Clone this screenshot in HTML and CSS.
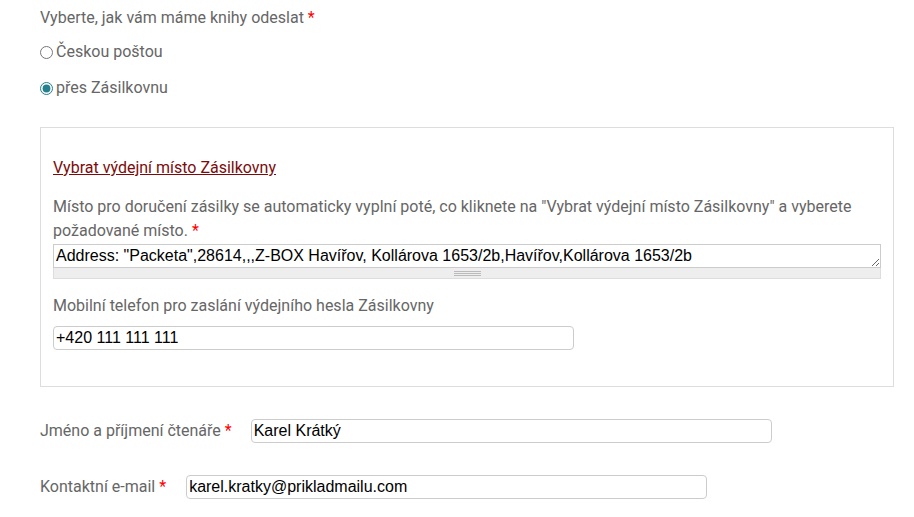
FILE: index.html
```html
<!DOCTYPE html>
<html lang="cs">
<head>
<meta charset="utf-8">
<link rel="stylesheet" href="styles.css">
</head>
<body>
<form class="form">
  <div class="question">Vyberte, jak vám máme knihy odeslat <span class="req">*</span></div>
  <label class="option option-first"><input type="radio" name="ship" class="radio"> Českou poštou</label>
  <label class="option option-second"><input type="radio" name="ship" class="radio" checked> přes Zásilkovnu</label>

  <div class="box">
    <a class="pick-link" href="#">Vybrat výdejní místo Zásilkovny</a>
    <p class="desc">Místo pro doručení zásilky se automaticky vyplní poté, co kliknete na "Vybrat výdejní místo Zásilkovny" a vyberete požadované místo. <span class="req">*</span></p>
    <div class="ta-wrap">
      <textarea class="address" rows="1">Address: "Packeta",28614,,,Z-BOX Havířov, Kollárova 1653/2b,Havířov,Kollárova 1653/2b</textarea>
      <div class="grippie"><span class="grip-lines"></span></div>
    </div>
    <div class="field-label">Mobilní telefon pro zaslání výdejního hesla Zásilkovny</div>
    <input class="text-input phone" type="text" value="+420 111 111 111">
  </div>

  <div class="row row-name">
    <span class="row-label">Jméno a příjmení čtenáře <span class="req">*</span></span>
    <input class="text-input" type="text" value="Karel Krátký">
  </div>
  <div class="row row-mail">
    <span class="row-label">Kontaktní e-mail <span class="req">*</span></span>
    <input class="text-input" type="text" value="karel.kratky@prikladmailu.com">
  </div>
</form>
</body>
</html>
```

FILE: styles.css
```css
html, body {
  margin: 0;
  padding: 0;
  background: #fff;
}
body {
  font-family: Roboto, "Noto Sans", sans-serif;
  font-size: 16px;
  line-height: 24px;
  color: #666;
}
.form {
  padding: 6px 0 0 40px;
  width: 854px;
}
.req {
  color: #f00;
}
.question {
  height: 24px;
}
.option {
  display: flex;
  align-items: center;
  height: 24px;
  gap: 3px;
}
.option-first {
  margin-top: 10px;
}
.option-second {
  margin-top: 12px;
}
.radio {
  margin: 0;
  width: 13px;
  height: 13px;
  accent-color: #24808f;
}
.box {
  margin-top: 27px;
  border: 1px solid #ddd;
  padding: 28px 12px 36px 12px;
}
.pick-link {
  display: block;
  width: max-content;
  color: #7d0a0a;
  text-decoration: underline;
}
.desc {
  margin: 15px 0 0 0;
}
.ta-wrap {
  margin-top: 1px;
  width: 828px;
}
.address {
  display: block;
  box-sizing: border-box;
  width: 828px;
  height: 24px;
  margin: 0;
  padding: 0 2px;
  border: 1px solid #ccc;
  font-family: "Liberation Sans", Arial, sans-serif;
  font-size: 16px;
  line-height: 21px;
  color: #000;
  overflow: hidden;
  resize: vertical;
}
.grippie {
  box-sizing: border-box;
  height: 11px;
  background: #eee;
  border: 1px solid #ddd;
  border-top: none;
  display: flex;
  justify-content: center;
  align-items: center;
}
.grip-lines {
  width: 27px;
  height: 5px;
  border-top: 1px solid #bbb;
  border-bottom: 1px solid #bbb;
  box-sizing: border-box;
  background: linear-gradient(#eee 0 1px, #bbb 1px 2px, #eee 2px);
  margin-top: 1px;
}
.field-label {
  margin-top: 15px;
}
.text-input {
  display: block;
  box-sizing: border-box;
  width: 521px;
  height: 24px;
  margin: 0;
  padding: 0 2px;
  border: 1px solid #ccc;
  border-radius: 4px;
  font-family: "Liberation Sans", Arial, sans-serif;
  font-size: 16px;
  color: #000;
  background: #fff;
}
.phone {
  margin-top: 8px;
}
.row {
  display: flex;
  align-items: center;
  height: 24px;
}
.row-name {
  margin-top: 32px;
}
.row-mail {
  margin-top: 32px;
}
.row-name .row-label {
  margin-right: 19px;
}
.row-mail .row-label {
  margin-right: 20px;
}
```
